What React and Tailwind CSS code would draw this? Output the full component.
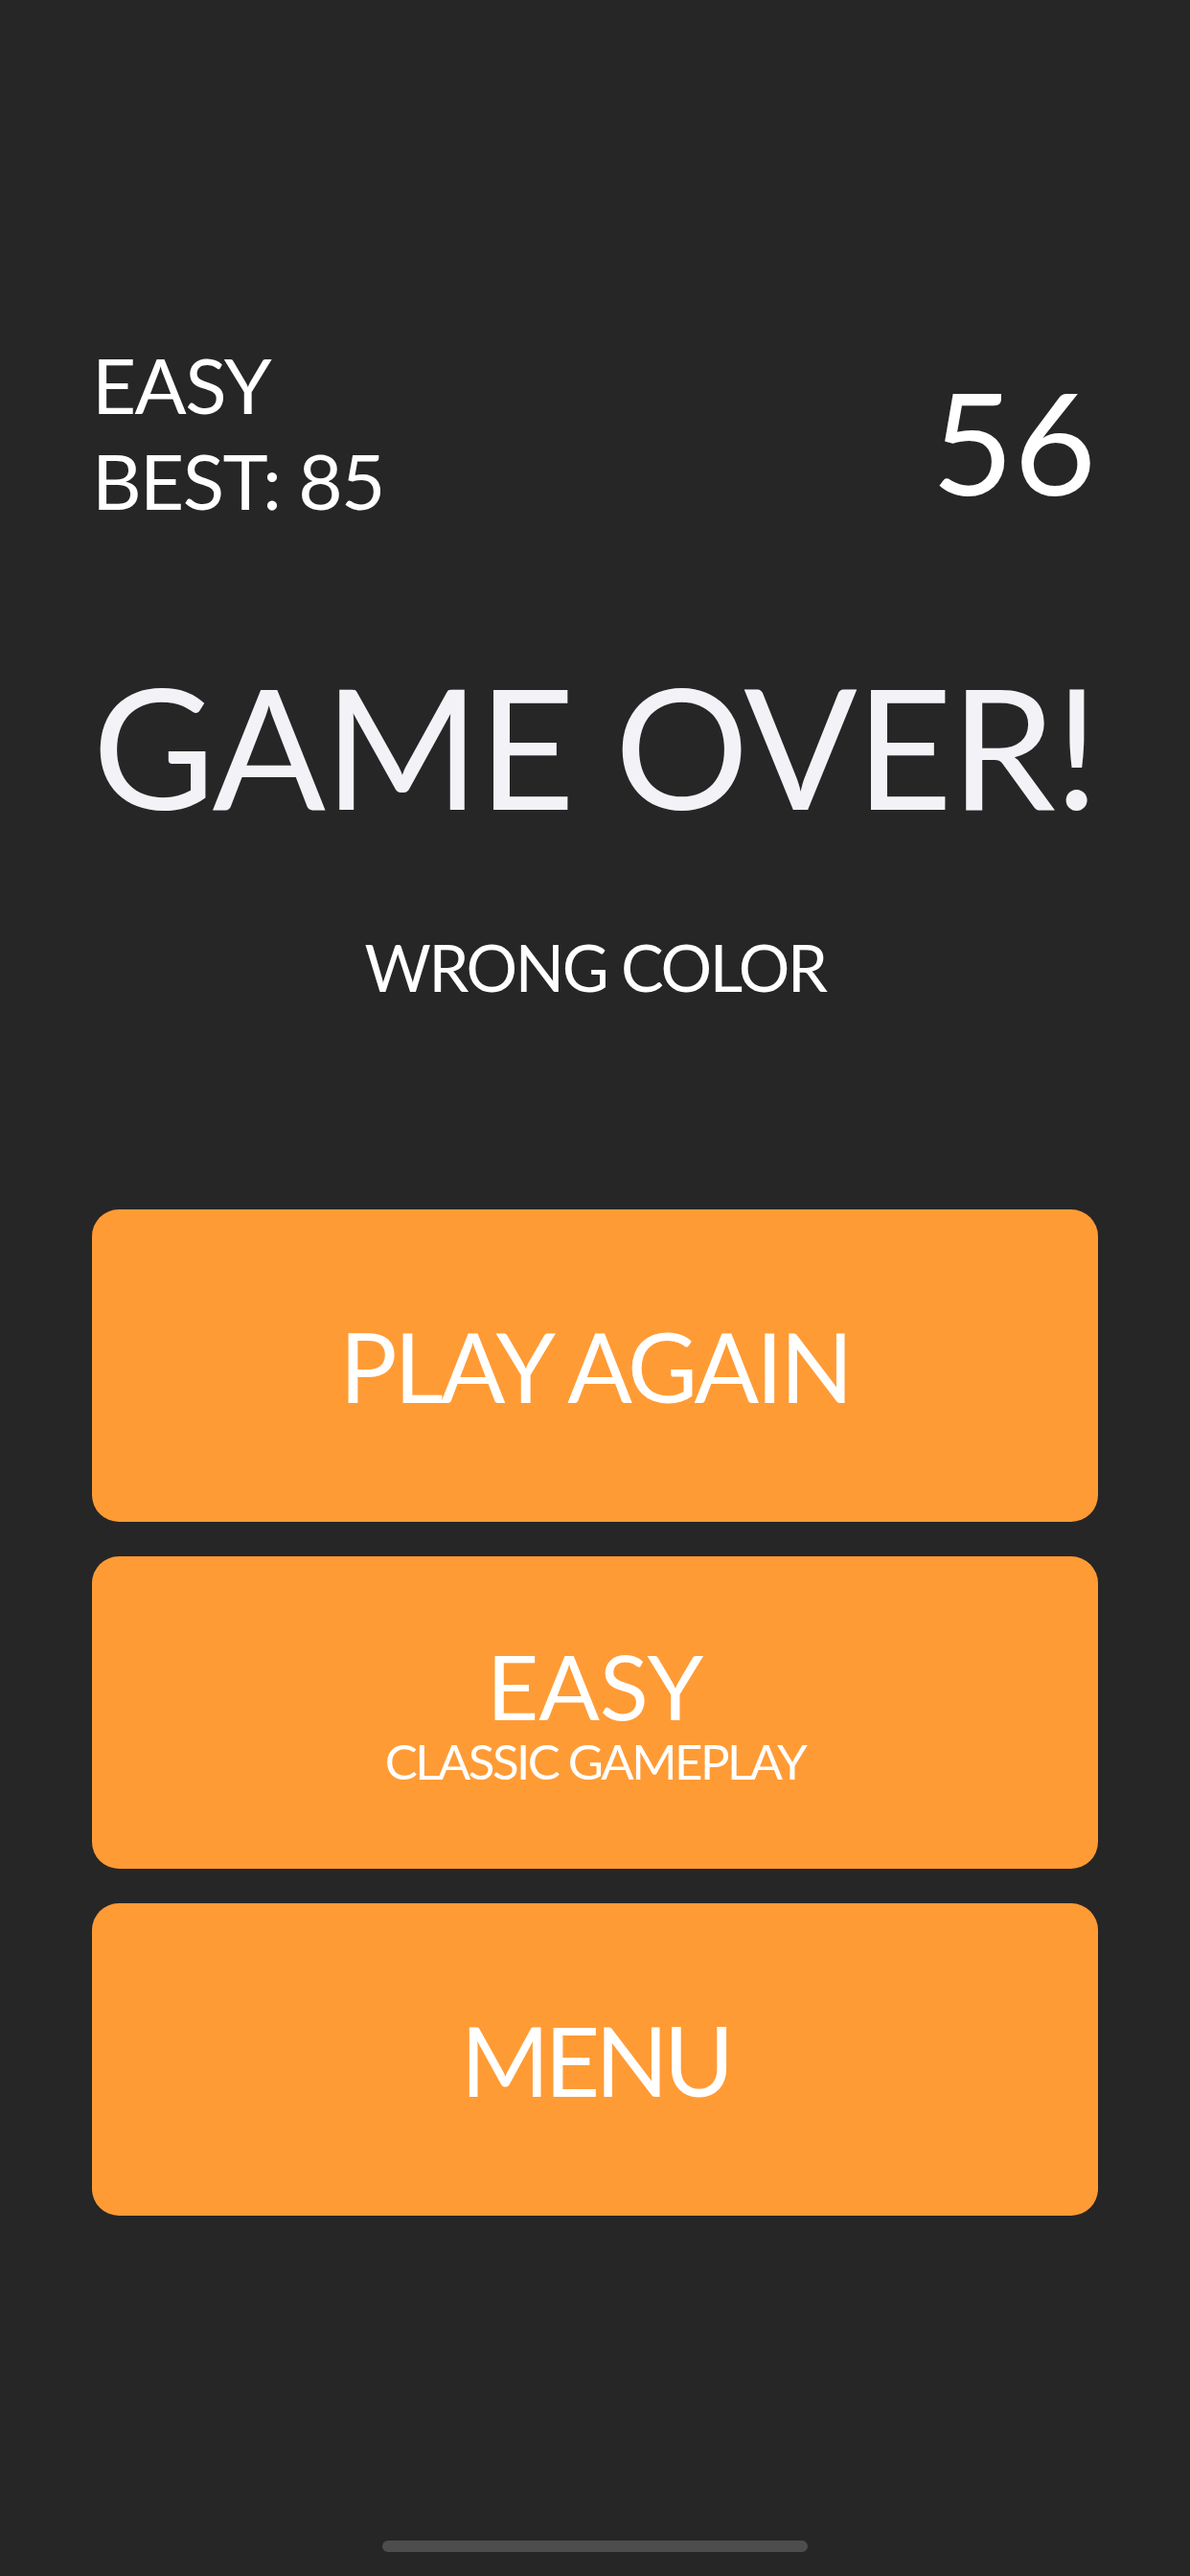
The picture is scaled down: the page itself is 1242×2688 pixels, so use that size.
import React from 'react';

const font = { fontFamily: 'Lato, "Noto Sans", sans-serif' };

const OrangeButton = ({ children }) => (
  <button className="flex h-[326px] w-full flex-col items-center justify-center rounded-[28px] bg-[#ff9b35] text-white">
    {children}
  </button>
);

export default function App() {
  return (
    <div style={font} className="flex h-[2688px] w-full flex-col bg-[#262626] px-[96px]">
      <div className="flex items-start justify-between pt-[351px]">
        <div className="text-[80px] leading-[100px] tracking-[-0.02em] text-white">
          <div>EASY</div>
          <div>BEST: 85</div>
        </div>
        <div className="mt-[35px] pr-[2px] text-[148px] leading-none text-white">56</div>
      </div>

      <h1 className="-mx-[40px] mt-[139px] whitespace-nowrap text-center text-[175px] font-normal leading-none tracking-[-0.01em] text-[#f2f2f7]">
        GAME OVER!
      </h1>

      <p className="mt-[111px] text-center text-[67px] leading-none tracking-[-0.035em] text-white">WRONG COLOR</p>

      <div className="mt-[219px] flex flex-col gap-[36px]">
        <OrangeButton>
          <span className="text-[100px] leading-none tracking-[-0.03em]">PLAY AGAIN</span>
        </OrangeButton>
        <OrangeButton>
          <span className="text-[94px] leading-none">EASY</span>
          <span className="mt-[6px] text-[51px] leading-none tracking-[-0.05em]">CLASSIC GAMEPLAY</span>
        </OrangeButton>
        <OrangeButton>
          <span className="text-[100px] leading-none tracking-[-0.05em]">MENU</span>
        </OrangeButton>
      </div>

      <div className="mx-auto mt-[339px] h-[12px] w-[444px] rounded-full bg-[#4d4d4d]" />
    </div>
  );
}
